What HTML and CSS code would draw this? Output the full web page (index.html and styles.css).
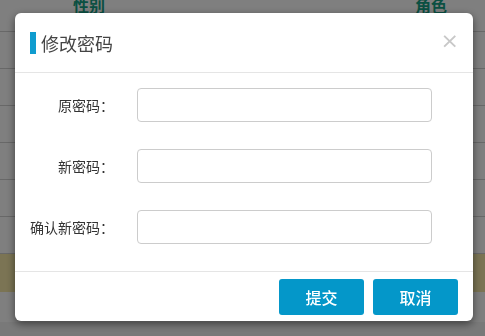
FILE: index.html
```html
<!DOCTYPE html>
<html lang="zh">
<head>
<meta charset="utf-8">
<link rel="stylesheet" href="styles.css">
</head>
<body>
<div class="page">
  <div class="thead">
    <span class="th th-sex">性别</span>
    <span class="th th-role">角色</span>
  </div>
  <div class="row"></div>
  <div class="row"></div>
  <div class="row"></div>
  <div class="row"></div>
  <div class="row"></div>
  <div class="row"></div>
  <div class="row row-warn"></div>
  <div class="row row-last"></div>
</div>
<div class="overlay"></div>
<div class="modal">
  <div class="modal-header">
    <span class="bar"></span>
    <span class="title">修改密码</span>
    <span class="close">×</span>
  </div>
  <div class="modal-body">
    <div class="field">
      <label class="label">原密码：</label>
      <input class="input" type="password">
    </div>
    <div class="field">
      <label class="label">新密码：</label>
      <input class="input" type="password">
    </div>
    <div class="field">
      <label class="label">确认新密码：</label>
      <input class="input" type="password">
    </div>
  </div>
  <div class="modal-footer">
    <button class="btn">提交</button>
    <button class="btn">取消</button>
  </div>
</div>
</body>
</html>
```

FILE: styles.css
```css
html, body {
  margin: 0;
  padding: 0;
  background: #fff;
  font-family: "Noto Sans CJK SC", "Noto Sans", sans-serif;
  overflow: hidden;
}
.page {
  width: 485px;
  height: 336px;
  display: flex;
  flex-direction: column;
}
.thead {
  height: 32px;
  border-bottom: 1px solid #d0d0d0;
  display: flex;
  align-items: flex-end;
  box-sizing: border-box;
}
.th {
  font-size: 16px;
  font-weight: bold;
  color: #16a085;
  line-height: 16px;
  margin-bottom: 18px;
}
.th-sex { margin-left: 73px; }
.th-role { margin-left: 310px; }
.row {
  height: 37px;
  border-bottom: 1px solid #d0d0d0;
  box-sizing: border-box;
  flex: none;
}
.row-warn {
  background: #f6e9a8;
  height: 38px;
  border-bottom: none;
}
.row-last {
  height: 30px;
  border-bottom: none;
}
.overlay {
  position: fixed;
  inset: 0;
  background: rgba(0, 0, 0, 0.5);
  box-shadow: inset 0 -14px 0 rgba(0,0,0,0.05);
}
.modal {
  position: fixed;
  left: 15px;
  top: 13px;
  width: 458px;
  height: 308px;
  background: #fff;
  border-radius: 6px;
  box-shadow: 0 3px 9px rgba(0, 0, 0, 0.5);
  display: flex;
  flex-direction: column;
}
.modal-header {
  height: 60px;
  box-sizing: border-box;
  border-bottom: 1px solid #e5e5e5;
  display: flex;
  align-items: center;
  padding: 0 15px;
  flex: none;
}
.bar {
  width: 6px;
  height: 22px;
  background: #0f9ccf;
  margin-right: 5px;
}
.title {
  font-size: 18px;
  color: #444;
  line-height: 22px;
  flex: 1;
}
.close {
  font-size: 22px;
  color: #c8c8c8;
  font-family: "DejaVu Sans", sans-serif;
  line-height: 22px;
  margin-right: -1px;
  margin-top: -4px;
}
.modal-body {
  flex: 1;
  padding: 15px 0 0 0;
  display: flex;
  flex-direction: column;
  gap: 27px;
}
.field {
  display: flex;
  align-items: center;
  height: 34px;
}
.label {
  width: 99px;
  text-align: right;
  font-size: 14px;
  color: #333;
  flex: none;
}
.input {
  margin-left: 23px;
  width: 295px;
  height: 34px;
  box-sizing: border-box;
  border: 1px solid #ccc;
  border-radius: 4px;
  background: #fff;
  outline: none;
}
.modal-footer {
  height: 50px;
  box-sizing: border-box;
  border-top: 1px solid #e5e5e5;
  display: flex;
  justify-content: flex-end;
  align-items: flex-start;
  padding: 7px 15px 0 0;
  gap: 9px;
  flex: none;
}
.btn {
  width: 85px;
  height: 36px;
  border: none;
  border-radius: 3px;
  background: #0497c9;
  color: #fff;
  font-size: 16px;
  font-weight: 500;
  font-family: "Noto Sans CJK SC", sans-serif;
  padding: 0;
}
```
